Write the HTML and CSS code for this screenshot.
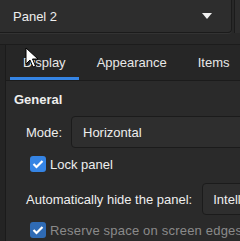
FILE: index.html
```html
<!DOCTYPE html>
<html lang="en">
<head>
  <meta charset="UTF-8" />
  <title>Panel Preferences</title>
  <link rel="stylesheet" href="styles.css">
</head>
<body>

  <div class="top">
    <div class="combo panel-combo">
      <span>Panel 2</span>
      <svg class="arrow" width="12" height="8" viewBox="0 0 12 8"><path d="M1 1 L11 1 L6 7 Z" fill="#f0f0f0"/></svg>
    </div>
    <div class="side"></div>
  </div>

  <div class="notebook">
    <div class="tabs">
      <div class="tab active">Display</div>
      <div class="tab">Appearance</div>
      <div class="tab">Items</div>
    </div>

    <div class="page">
      <div class="heading">General</div>

      <div class="row">
        <span class="label mode-label">Mode:</span>
        <div class="combo mode-combo">Horizontal</div>
      </div>

      <label class="check lock">
        <span class="box"><svg width="12" height="10" viewBox="0 0 12 10"><path d="M1.5 5 L4.5 8 L10.5 2" stroke="#fff" stroke-width="2.2" fill="none"/></svg></span>
        Lock panel
      </label>

      <div class="row hide-row">
        <span class="label">Automatically hide the panel:</span>
        <div class="combo hide-combo">Intelligently</div>
      </div>

      <label class="check dim">
        <span class="box"><svg width="12" height="10" viewBox="0 0 12 10"><path d="M1.5 5 L4.5 8 L10.5 2" stroke="#fff" stroke-width="2.2" fill="none"/></svg></span>
        Reserve space on screen edges for the panel
      </label>
    </div>
  </div>

  <svg class="cursor" width="16" height="22" viewBox="0 0 16 22">
    <path d="M1 1 L1 17 L5 13 L8 20 L10.5 19 L7.5 12 L13 12 Z" fill="#fff" stroke="#000" stroke-width="1"/>
  </svg>

</body>
</html>
```

FILE: styles.css
```css
* {
  box-sizing: border-box;
  margin: 0;
  padding: 0;
}

body {
  font-family: 'Liberation Sans', Arial, sans-serif;
  font-size: 13px;
  color: #eeeeee;
  background: #242424;
  width: 240px;
  height: 241px;
  overflow: hidden;
  position: relative;
}

.top {
  display: flex;
  height: 45px;
  border-bottom: 1px solid #1c1c1c;
  background: #282828;
}

.combo {
  background: #2e2e2e;
  border: 1px solid #1b1b1b;
  border-radius: 4px;
  display: flex;
  align-items: center;
  white-space: nowrap;
  overflow: hidden;
}

.panel-combo {
  width: 232px;
  height: 33px;
  border-width: 0 1px 1px 0;
  border-radius: 0 0 4px 0;
  padding: 0 12px 0 13px;
  justify-content: space-between;
  background: #2d2d2d;
  box-shadow: 0 1px 0 #333;
}

.arrow {
  margin-right: 6px;
}

.side {
  flex: 1;
  height: 33px;
  margin-left: 2px;
  border-left: 1px solid #1b1b1b;
  background: #2d2d2d;
}

.notebook {
  margin-left: 5px;
  border-left: 1px solid #1b1b1b;
  background: #2a2a2a;
  height: 196px;
}

.tabs {
  display: flex;
  height: 36px;
  background: #262626;
  border-bottom: 1px solid #1b1b1b;
  padding-left: 4px;
  white-space: nowrap;
}

.tab {
  padding: 0 13px;
  display: flex;
  align-items: center;
  margin-right: 5px;
  color: #e8e8e8;
}

.tab.active {
  box-shadow: inset 0 -3px 0 #3584e4;
}

.page {
  padding: 11px 0 0 8px;
}

.heading {
  font-weight: bold;
  line-height: 16px;
  margin-bottom: 8px;
}

.row {
  display: flex;
  align-items: center;
  padding-left: 12px;
  gap: 12px;
}

.label {
  white-space: nowrap;
}

.mode-label {
  width: 33px;
}

.mode-combo {
  height: 32px;
  flex: none;
  width: 200px;
  padding-left: 11px;
}

.hide-row {
  margin-top: 11px;
  gap: 10px;
}

.hide-combo {
  height: 32px;
  width: 60px;
  flex: none;
  padding-left: 10px;
}

.check {
  display: flex;
  align-items: center;
  gap: 4px;
  padding-left: 16px;
  height: 16px;
  white-space: nowrap;
}

.lock {
  margin-top: 8px;
}

.box {
  width: 16px;
  height: 16px;
  border-radius: 3px;
  background: #3584e4;
  display: flex;
  align-items: center;
  justify-content: center;
  flex: none;
}

.check.dim {
  color: #8a8a8a;
  margin-top: 7px;
  letter-spacing: 0.2px;
}

.check.dim .box {
  background: #2f6bb5;
}

.cursor {
  position: absolute;
  left: 25px;
  top: 47px;
}
```
